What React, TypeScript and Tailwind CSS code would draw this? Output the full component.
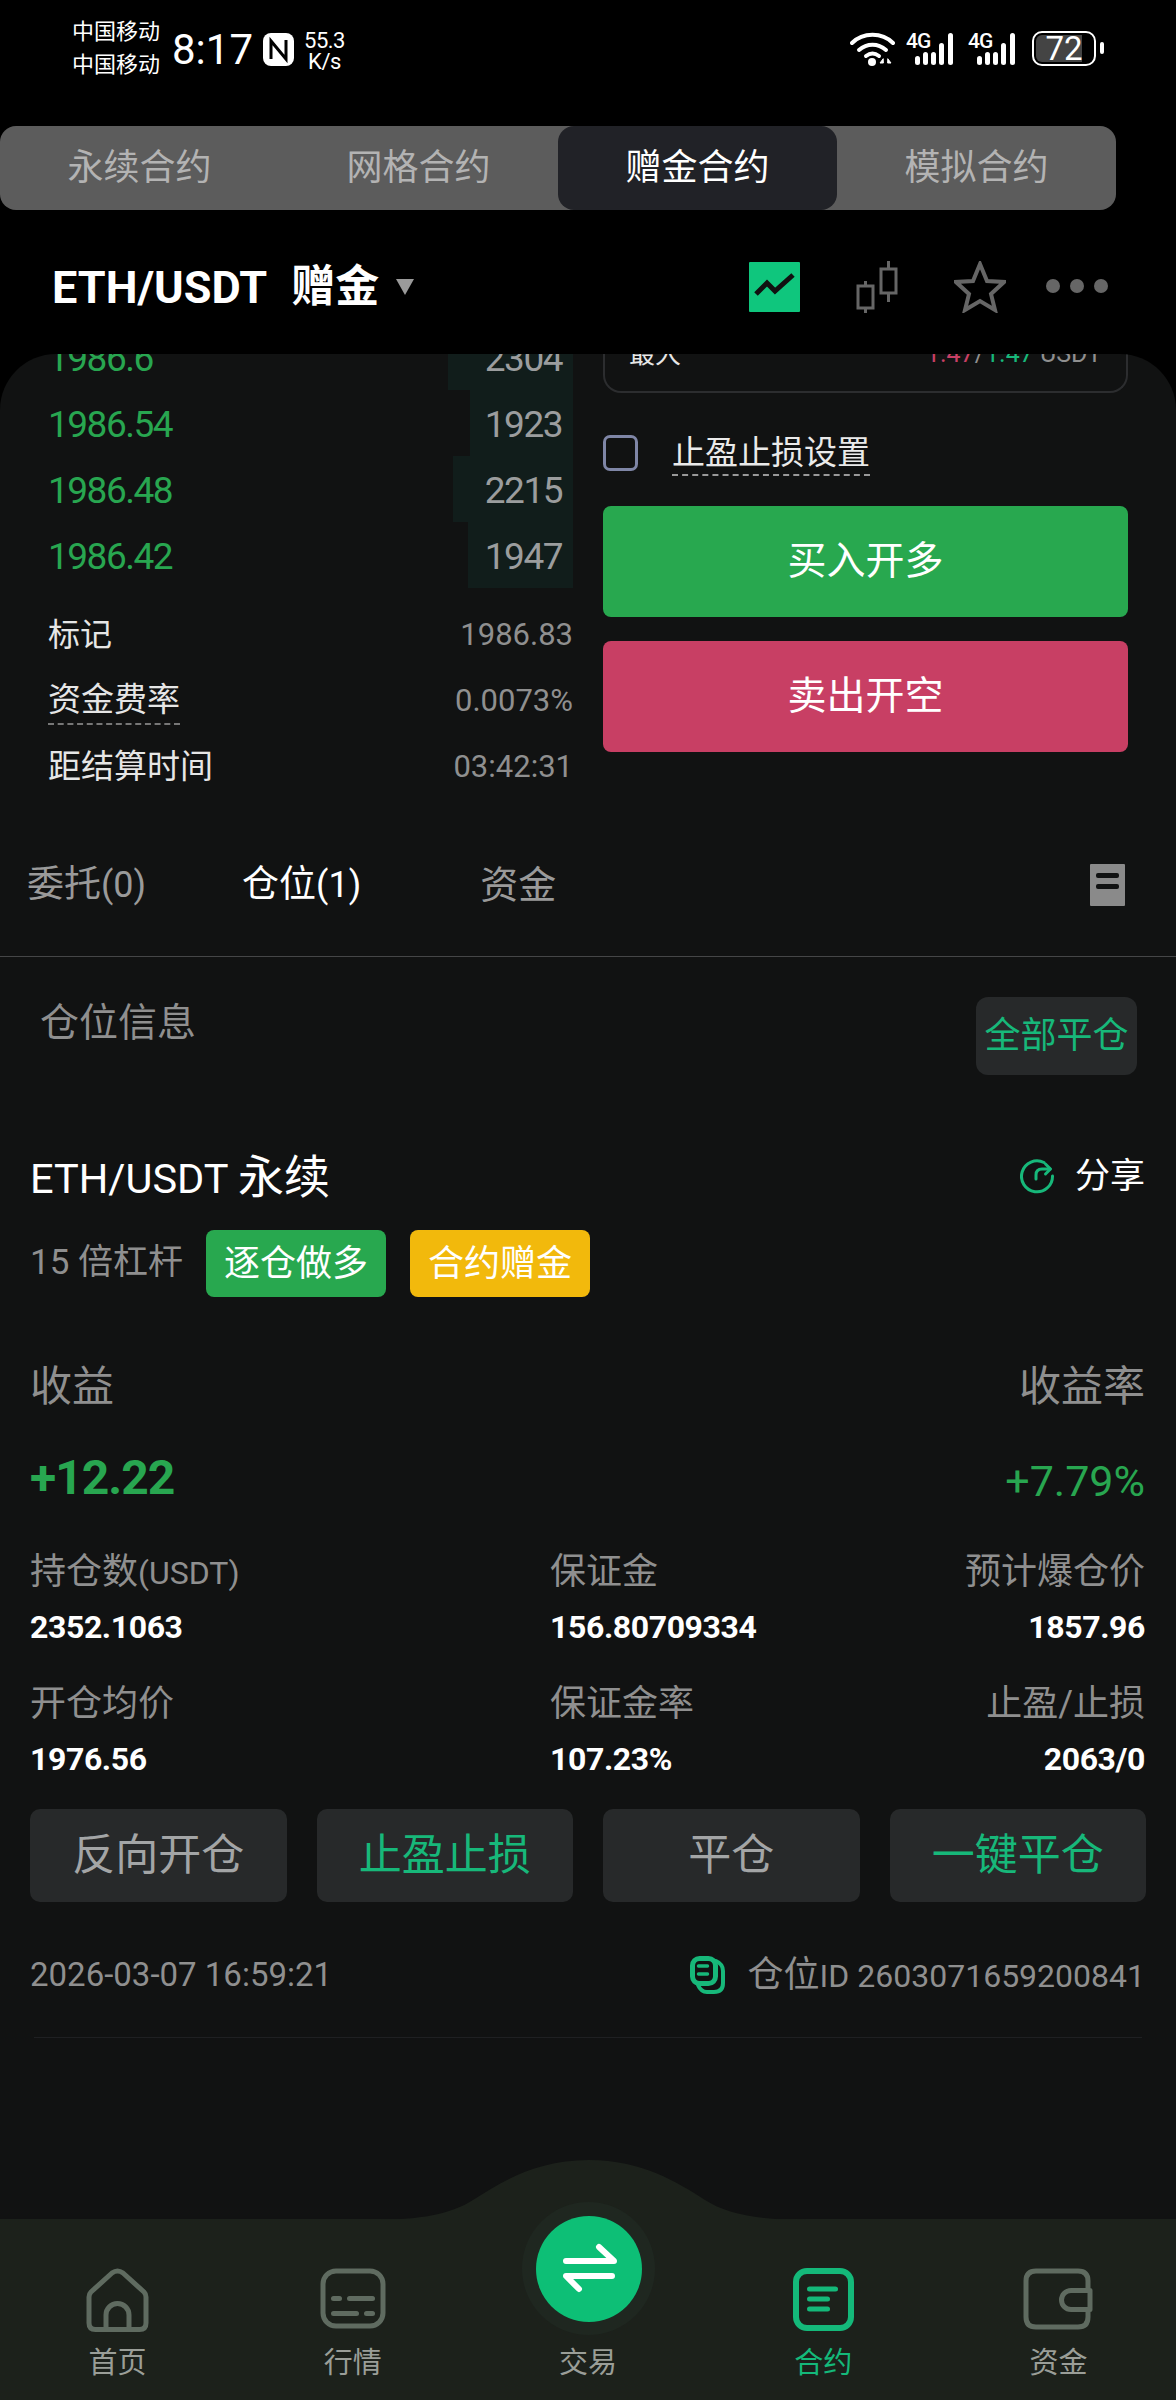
const green = "text-[#28a650]";

const tabs = ["永续合约", "网格合约", "赠金合约", "模拟合约"];

const book = [
  { price: "1986.6", size: "2304", bar: 125 },
  { price: "1986.54", size: "1923", bar: 103 },
  { price: "1986.48", size: "2215", bar: 120 },
  { price: "1986.42", size: "1947", bar: 105 },
];

const stats = [
  { label: "持仓数", unit: "(USDT)", value: "2352.1063" },
  { label: "保证金", value: "156.80709334" },
  { label: "预计爆仓价", value: "1857.96", right: true },
  { label: "开仓均价", value: "1976.56" },
  { label: "保证金率", value: "107.23%" },
  { label: "止盈/止损", value: "2063/0", right: true },
];

const actions = [
  { label: "反向开仓", color: "text-[#a3a5a6]" },
  { label: "止盈止损", color: "text-[#17b87a]" },
  { label: "平仓", color: "text-[#a3a5a6]" },
  { label: "一键平仓", color: "text-[#17b87a]" },
];

function SignalIcon() {
  return (
    <svg width="51" height="40" viewBox="0 -4 51 40" className="-mt-[4px] text-white">
      <text x="0" y="17" fill="currentColor" fontSize="21" fontWeight="500" fontFamily="Roboto" letterSpacing="-1">4G</text>
      {[
        [9, 25, 9],
        [17, 21, 13],
        [25, 21, 13],
        [33, 12, 22],
        [42, 2, 32],
      ].map(([x, y, h]) => (
        <rect key={x} x={x} y={y} width="5" height={h} rx="2.5" fill="currentColor" />
      ))}
    </svg>
  );
}

function StatusBar() {
  return (
    <div className="flex h-[126px] items-start pl-[72px] pr-[72px] pt-[15px] text-white">
      <div className="flex flex-col text-[22px] leading-[33px]">
        <span>中国移动</span>
        <span>中国移动</span>
      </div>
      <span className="ml-[12px] mt-[7px] text-[42px] leading-[56px]">8:17</span>
      <svg width="31" height="33" viewBox="0 0 31 33" className="ml-[10px] mt-[18px]">
        <rect width="31" height="33" rx="8" fill="#fff" />
        <path d="M8 26V8l15 18V7" fill="none" stroke="#000" strokeWidth="3" />
      </svg>
      <div className="ml-[10px] mt-[15px] flex flex-col items-center text-[22px] leading-[21px] tracking-[-0.5px]">
        <span>55.3</span>
        <span>K/s</span>
      </div>
      <div className="ml-auto mt-[16px] flex items-start">
        <svg width="46" height="36" viewBox="0 0 46 36" fill="none" stroke="#fff" strokeWidth="4" strokeLinecap="round" className="ml-[3px]">
          <path d="M2 12C13 1 32 1 43 12" />
          <path d="M9 19c8-7 19-7 27 0" />
          <path d="M16 25c4-3 9-3 13 0" />
          <circle cx="22" cy="31" r="4" fill="#fff" stroke="none" />
          <path d="M33 28l-3 4h3zM38 28l3 4h-3z" fill="#fff" strokeWidth="1" />
        </svg>
        <div className="ml-[10px]">
          <SignalIcon />
        </div>
        <div className="ml-[11px]">
          <SignalIcon />
        </div>
        <div className="relative ml-[13px] h-[35px] w-[64px] rounded-[10px] border-2 border-white p-[2px]">
          <div className="h-full w-[46px] rounded-l-[6px] bg-[#444]" />
          <span className="absolute inset-0 flex items-center justify-center text-[33px] leading-none">72</span>
        </div>
        <div className="ml-[4px] mt-[11px] h-[12px] w-[4px] rounded-full bg-white" />
      </div>
    </div>
  );
}

function Header() {
  return (
    <div className="flex h-[144px] items-center pl-[52px] pr-[68px] pt-[10px]">
      <span className="text-[45px] font-bold leading-none text-white">ETH/USDT</span>
      <span className="ml-[24px] text-[44px] font-bold leading-none text-white">赠金</span>
      <span className="ml-[17px] h-0 w-0 border-x-[9px] border-t-[16px] border-x-transparent border-t-[#9a9a9a]" />
      <svg width="51" height="50" viewBox="0 0 51 50" className="ml-auto">
        <rect width="51" height="50" rx="1" fill="#0fc67d" />
        <path d="M7 32l11-11 8 8L44 13" fill="none" stroke="#111" strokeWidth="5" />
      </svg>
      <svg width="42" height="52" viewBox="0 0 42 52" fill="none" stroke="#666" strokeWidth="3" className="ml-[56px]">
        <rect x="2" y="25" width="15" height="22" />
        <path d="M9.500 20v5M9.500 47v5" />
        <rect x="25" y="8" width="15" height="24" />
        <path d="M32.500 0v8M32.500 32v9" />
      </svg>
      <svg width="52" height="52" viewBox="0 0 52 52" fill="none" stroke="#666" strokeWidth="4" className="ml-[56px]">
        <path d="M26 3l7 17 17 1-13 12 4 16-15-9-15 9 4-16L2 21l17-1z" />
      </svg>
      <div className="ml-[40px] -mt-[3px] flex gap-[10px]">
        <span className="h-[14px] w-[14px] rounded-full bg-[#666]" />
        <span className="h-[14px] w-[14px] rounded-full bg-[#666]" />
        <span className="h-[14px] w-[14px] rounded-full bg-[#666]" />
      </div>
    </div>
  );
}

function OrderColumn() {
  return (
    <div className="ml-[48px] w-[525px]">
      <div className="-mt-[30px]">
        {book.map((row) => (
          <div key={row.price} className="relative flex h-[66px] items-center justify-between pr-[11px] pt-[3px] text-[37px] tracking-[-1.500px]">
            <div className="absolute inset-y-0 right-0 bg-[#111d1b]" style={{ width: row.bar }} />
            <span className={`relative ${green}`}>{row.price}</span>
            <span className="relative text-[#9b9d9e]">{row.size}</span>
          </div>
        ))}
      </div>
      <div className="mt-[14px]">
        <div className="flex h-[66px] items-center justify-between">
          <span className="text-[32px] text-[#e6e6e6]">标记</span>
          <span className="text-[31px] text-[#8f8f8f]">1986.83</span>
        </div>
        <div className="flex h-[66px] items-center justify-between">
          <span className="border-b-2 border-dashed border-[#777] pb-[1px] text-[33px] leading-[44px] text-[#e6e6e6]">资金费率</span>
          <span className="text-[31px] text-[#8f8f8f]">0.0073%</span>
        </div>
        <div className="flex h-[66px] items-center justify-between">
          <span className="text-[33px] text-[#e6e6e6]">距结算时间</span>
          <span className="text-[31px] text-[#8f8f8f]">03:42:31</span>
        </div>
      </div>
    </div>
  );
}

function TradeColumn() {
  return (
    <div className="ml-[30px] w-[525px]">
      <div className="-mt-[30px] flex h-[69px] items-start justify-between rounded-b-[18px] border-2 border-t-0 border-[#2c2d2f] px-[24px] pt-[8px] leading-[44px]">
        <span className="text-[26px] text-[#e6e6e6]">最大</span>
        <span className="text-[25px]">
          <span className="text-[#c83f64]">1.47</span>
          <span className="text-[#8f8f8f]">/</span>
          <span className="text-[#17b87a]">1.47</span>
          <span className="text-[#8f8f8f]"> USDT</span>
        </span>
      </div>
      <div className="mt-[42px] flex h-[36px] items-center">
        <span className="h-[36px] w-[35px] rounded-[7px] border-[3px] border-[#7f86a6]" />
        <span className="ml-[34px] mt-[2px] border-b-2 border-dashed border-[#999] text-[33px] leading-[42px] text-[#eaeaea]">止盈止损设置</span>
      </div>
      <button className="mt-[35px] flex h-[111px] w-full items-center justify-center rounded-[8px] bg-[#28a84f] text-[39px] text-white">买入开多</button>
      <button className="mt-[24px] flex h-[111px] w-full items-center justify-center rounded-[8px] bg-[#c83f64] text-[39px] text-white">卖出开空</button>
    </div>
  );
}

function PositionTabs() {
  return (
    <div className="flex h-[157px] items-center border-b border-[#454647] pl-[27px] pr-[51px] pt-[14px]">
      <span className="text-[37px] text-[#9a9a9a]">
        委托<span className="text-[36px]">(0)</span>
      </span>
      <span className="ml-[96px] text-[37px] text-white">
        仓位<span className="text-[36px]">(1)</span>
      </span>
      <span className="ml-[119px] text-[38px] text-[#9a9a9a]">资金</span>
      <svg width="35" height="42" viewBox="0 0 35 42" className="ml-auto">
        <rect width="35" height="42" rx="1" fill="#8a8a8a" />
        <rect x="6" y="9" width="23" height="5" rx="2" fill="#111212" />
        <rect x="6" y="20" width="23" height="5" rx="2" fill="#111212" />
      </svg>
    </div>
  );
}

function PositionCard() {
  return (
    <div className="pl-[30px] pr-[31px]">
      <div className="flex h-[60px] items-center justify-between">
        <span className="text-[41.500px] leading-none text-white">
          ETH/USDT <span className="text-[46px]">永续</span>
        </span>
        <div className="flex items-center">
          <svg width="36" height="36" viewBox="0 0 36 36" fill="none" stroke="#17b87a" strokeWidth="3" strokeLinecap="round" strokeLinejoin="round">
            <path d="M24 3.500A15.500 15.500 0 1 0 32.500 17" />
            <path d="M16 20v-4q0-6 6-6h8" />
            <path d="M25.500 5l5 5-5 5" />
          </svg>
          <span className="ml-[19px] text-[35px] text-white">分享</span>
        </div>
      </div>
      <div className="mt-[23px] flex h-[67px] items-center">
        <span className="w-[176px] text-[35px] text-[#8f8f8f]">15 倍杠杆</span>
        <span className="flex h-[67px] w-[180px] items-center justify-center rounded-[8px] bg-[#28a84f] text-[36px] text-white">逐仓做多</span>
        <span className="ml-[24px] flex h-[67px] w-[180px] items-center justify-center rounded-[8px] bg-[#f2b90c] text-[36px] text-white">合约赠金</span>
      </div>
      <div className="mt-[59px] flex h-[60px] items-center justify-between text-[42px] text-[#8f8f8f]">
        <span>收益</span>
        <span>收益率</span>
      </div>
      <div className="mt-[32px] flex h-[60px] items-center justify-between">
        <span className={`text-[48px] font-bold tracking-[-1px] ${green}`}>+12.22</span>
        <span className={`mt-[6px] text-[43px] ${green}`}>+7.79%</span>
      </div>
      <div className="mt-[38px] grid grid-cols-[520px_1fr_1fr] gap-y-[29px]">
        {stats.map((s) => (
          <div key={s.label} className={s.right ? "text-right" : ""}>
            <div className="h-[48px] text-[36px] leading-[52px] text-[#8f8f8f]">
              {s.label}
              {s.unit && <span className="text-[32px]">{s.unit}</span>}
            </div>
            <div className="mt-[11px] h-[44px] text-[32px] font-bold leading-[44px] tracking-[-0.400px] text-white">{s.value}</div>
          </div>
        ))}
      </div>
    </div>
  );
}

function NavIcon({ name }: { name: string }) {
  const gray = "#5f6b60";
  if (name === "home") {
    return (
      <svg width="64" height="66" viewBox="0 0 64 66" fill="none" stroke={gray} strokeWidth="5" strokeLinejoin="round">
        <path d="M3 29q0-3 2-5L26 5q5.500-4 11 0l21 19q2 2 2 5v26q0 6.500-6.500 6.500H9.500Q3 61.500 3 55z" />
        <path d="M20 61V47a11.500 11.500 0 0 1 23 0v14" />
      </svg>
    );
  }
  if (name === "market") {
    return (
      <svg width="66" height="66" viewBox="0 0 66 66" fill="none">
        <rect x="3" y="3" width="60" height="55" rx="13" stroke={gray} strokeWidth="5" />
        <rect x="11" y="28" width="11" height="5" rx="2.500" fill={gray} />
        <rect x="27" y="28" width="28" height="5" rx="2.500" fill={gray} />
        <rect x="11" y="43" width="28" height="5" rx="2.500" fill={gray} />
        <rect x="44" y="43" width="11" height="5" rx="2.500" fill={gray} />
      </svg>
    );
  }
  if (name === "contract") {
    return (
      <svg width="62" height="66" viewBox="0 0 62 66" fill="none">
        <rect x="4" y="3" width="55" height="57" rx="11" stroke="#14b97a" strokeWidth="6" />
        <rect x="15" y="18.500" width="31" height="5" rx="2.500" fill="#14b97a" />
        <rect x="15" y="28.500" width="23" height="5" rx="2.500" fill="#14b97a" />
        <rect x="15" y="38.500" width="23" height="5" rx="2.500" fill="#14b97a" />
      </svg>
    );
  }
  return (
    <svg width="70" height="66" viewBox="0 0 70 66" fill="none" stroke={gray} strokeWidth="5">
      <path d="M65 20v-7q0-10-10-10H13Q3 3 3 13v36q0 10 10 10h42q10 0 10-10v-6" />
      <path d="M67 22.500H48a9.500 9.500 0 0 0 0 19h19z" strokeLinejoin="round" />
    </svg>
  );
}

const navItems = [
  { key: "home", label: "首页" },
  { key: "market", label: "行情" },
  { key: "trade", label: "交易" },
  { key: "contract", label: "合约" },
  { key: "funds", label: "资金" },
];

function BottomNav() {
  return (
    <div className="relative h-[181px] bg-[#1c211b]">
      <svg width="436" height="60" viewBox="0 0 436 60" className="absolute -top-[59px] left-[371px]">
        <path d="M0 60C50 60 80 54 102 40 130 22 165 0 218 0s88 22 116 40c22 14 52 20 102 20z" fill="#1c211b" />
      </svg>
      <div className="absolute left-[522px] -top-[17px] flex h-[133px] w-[133px] items-center justify-center rounded-full bg-[#1f2720]">
        <svg width="106" height="106" viewBox="0 0 106 106">
          <circle cx="53" cy="53" r="53" fill="#0dbf76" />
          <path d="M30 45h48L63 31M76 60H30l13 13" fill="none" stroke="#fff" strokeWidth="6" strokeLinecap="round" strokeLinejoin="round" />
        </svg>
      </div>
      <div className="grid grid-cols-5 pt-[49px]">
        {navItems.map((item) => (
          <div key={item.key} className="flex flex-col items-center">
            <div className="flex h-[66px] items-center justify-center">
              {item.key !== "trade" && <NavIcon name={item.key} />}
            </div>
            <span className={`mt-[9px] text-[29px] leading-[40px] ${item.key === "contract" ? "text-[#14b97a]" : "text-[#9a9e98]"}`}>
              {item.label}
            </span>
          </div>
        ))}
      </div>
    </div>
  );
}

export default function App() {
  return (
    <div className="flex h-[2400px] w-[1176px] flex-col overflow-hidden bg-black font-['Roboto','Noto_Sans_CJK_SC',sans-serif]">
      <StatusBar />

      <div className="flex h-[84px] w-[1116px] rounded-[16px] bg-[#5c5c5c]">
        {tabs.map((t, i) => (
          <div
            key={t}
            className={`flex w-[279px] items-center justify-center rounded-[16px] text-[36px] ${
              i === 2 ? "bg-[#212227] text-white" : "text-[#b3b3b3]"
            }`}
          >
            {t}
          </div>
        ))}
      </div>

      <Header />

      <div className="flex flex-1 flex-col overflow-hidden rounded-t-[56px] bg-[#111212]">
        <div className="flex">
          <OrderColumn />
          <TradeColumn />
        </div>

        <PositionTabs />

        {/* position title */}
        <div className="flex items-start justify-between pl-[40px] pr-[39px] pt-[40px]">
          <span className="text-[39px] leading-[52px] text-[#8f8f8f]">仓位信息</span>
          <button className="flex h-[78px] w-[161px] items-center justify-center rounded-[12px] bg-[#27292a] text-[36px] text-[#17b87a]">全部平仓</button>
        </div>

        <div className="mt-[72px]">
          <PositionCard />
        </div>

        <div className="mt-[28px] grid grid-cols-4 gap-[30px] px-[30px]">
          {actions.map((a) => (
            <button key={a.label} className={`flex h-[93px] items-center justify-center rounded-[10px] bg-[#27292a] text-[43px] ${a.color}`}>
              {a.label}
            </button>
          ))}
        </div>

        <div className="mt-[49px] flex h-[48px] items-center justify-between pl-[30px] pr-[31px] text-[#8f8f8f]">
          <span className="text-[33px]">2026-03-07 16:59:21</span>
          <div className="flex items-center">
            <svg width="36" height="38" viewBox="0 0 36 38" fill="none" stroke="#17b87a" strokeLinecap="round">
              <path d="M26 5q7 3 7 10v12q0 9-9 9h-7q-6 0-9-7" strokeWidth="4" />
              <rect x="2.500" y="2.500" width="23" height="25" rx="7" fill="#111212" strokeWidth="5" />
              <path d="M8.500 10h9M8.500 18h9" strokeWidth="3.500" />
            </svg>
            <span className="ml-[22px] text-[32px]">
              <span className="text-[36px]">仓位</span>ID 2603071659200841
            </span>
          </div>
        </div>

        <div className="mx-[34px] mt-[38px] border-b border-[#1f2022]" />

        <div className="flex-1" />

        <BottomNav />
      </div>
    </div>
  );
}
